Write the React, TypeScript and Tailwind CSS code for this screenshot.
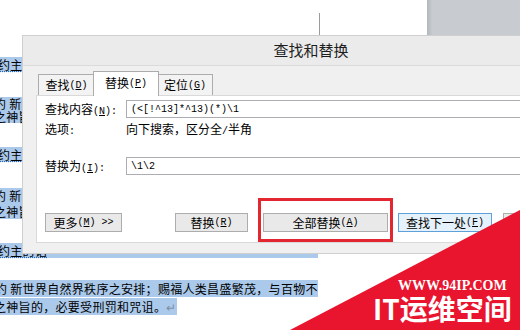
const mono = "font-['Liberation_Mono',monospace] text-[10px]";
const hl = "bg-[#abc9ea]";

const Key = ({ k, after = "" }: { k: string; after?: string }) => {
  return (
    <span className={mono}>
      (<span className="underline underline-offset-1">{k}</span>){after}
    </span>
  );
};

const Btn = ({
  label,
  k,
  tail = "",
  w,
  blue = false,
}: {
  label: string;
  k: string;
  tail?: string;
  w: string;
  blue?: boolean;
}) => {
  return (
    <div
      className={`${w} h-[19px] flex items-center justify-center border ${
        blue ? "border-[#5ea0da] bg-[#e5f1fb]" : "border-[#adadad] bg-[#e9e9e9]"
      }`}
    >
      {label}
      <Key k={k} after={tail} />
    </div>
  );
};

const App = () => {
  return (
    <div className="relative w-[520px] h-[330px] overflow-hidden bg-white text-black font-['Noto_Sans_CJK_SC','Noto_Sans',sans-serif] text-[12px]">
      {/* top of page + grey desk */}
      <div className="flex h-[35px]">
        <div className="w-[319px]"></div>
        <div className="w-px mt-[13px] bg-[#9c9c9c]"></div>
        <div className="flex-1"></div>
        <div className="w-[93px] bg-linear-to-r from-[#b3b6ba] from-0% to-[#c8cbd0] to-6%"></div>
      </div>

      {/* document behind the dialog */}
      <div className="tracking-[0.3px] whitespace-nowrap">
        <div className="mt-[22px] h-[15px] leading-[15px] -ml-[2px]">
          <span className={`${hl} inline-block w-[80px] underline decoration-dotted decoration-[#2b6cb0]`}>
            约主的话
          </span>
        </div>
        <div className="mt-[25px] -ml-[6px]">
          <div className="h-[13px] leading-[13px]">
            <span className={`${hl} inline-block w-[80px]`}>约 新世界</span>
          </div>
          <div className="h-[13px] leading-[13px]">
            <span className={`${hl} inline-block w-[80px]`}>之神旨的</span>
          </div>
        </div>
        <div className="mt-[24px] h-[15px] leading-[15px] -ml-[2px]">
          <span className={`${hl} inline-block w-[80px] underline decoration-dotted decoration-[#2b6cb0]`}>
            约主的话
          </span>
        </div>
        <div className="mt-[26px] -ml-[6px]">
          <div className="h-[15.5px] leading-[15.5px]">
            <span className={`${hl} inline-block w-[80px]`}>约 新世界</span>
          </div>
          <div className="h-[15.5px] leading-[15.5px]">
            <span className={`${hl} inline-block w-[80px]`}>之神旨的</span>
          </div>
        </div>
        <div className="mt-[24px] h-[15px] leading-[15px] -ml-[2px]">
          <span className={`${hl} inline-block w-[320px] underline decoration-dotted decoration-[#2b6cb0]`}>
            约主的话
          </span>
        </div>
        <div className="mt-[22px]">
          <div className="h-[17.5px] leading-[17.5px] -ml-[5px]">
            <span className={hl}>约 新世界自然界秩序之安排；赐福人类昌盛繁茂，与百物不</span>
          </div>
          <div className="h-[17.5px] leading-[17.5px] -ml-[6px]">
            <span className={hl}>
              之神旨的，必要受刑罚和咒诅。<span className="text-[#7d8fa6]">↵</span>
            </span>
          </div>
        </div>
      </div>

      {/* find & replace dialog */}
      <div className="absolute left-[22px] top-[35px] w-[578px] h-[219px] border border-[#cfcfcf] bg-[#f0f0f0] flex flex-col">
        <div className="h-[30px] shrink-0 border-b border-[#dadada] bg-[#ebebeb] flex items-center justify-center text-[15px] text-[#1e1e1e]">
          查找和替换
        </div>
        <div className="pt-[5px] pl-[13px]">
          <div className="flex items-end h-[24px] pl-[2px]">
            <div className="w-[57px] h-[21px] border border-b-0 border-[#acacac] bg-[#f3f3f3] flex items-center justify-center">
              查找<Key k="D" />
            </div>
            <div className="relative z-10 -mx-[2px] -mb-px w-[66px] h-[25px] border border-b-0 border-[#acacac] bg-white flex items-center justify-center pb-[2px]">
              替换<Key k="P" />
            </div>
            <div className="w-[56px] h-[21px] border border-b-0 border-[#acacac] bg-[#f3f3f3] flex items-center justify-center">
              定位<Key k="G" />
            </div>
          </div>

          <div className="h-[148px] border border-[#d9d9d9] bg-white pl-[8px] pt-[4px]">
            <div className="flex items-center h-[18px]">
              <div className="w-[81px]">
                查找内容<Key k="N" after=":" />
              </div>
              <div className={`flex-1 h-[18px] border border-[#abadb3] pl-[4px] flex items-center ${mono}`}>
                (&lt;[!^13]*^13)(*)\1
              </div>
            </div>
            <div className="flex items-center h-[16px] mt-[3px]">
              <div className="w-[81px]">
                选项<span className={mono}>:</span>
              </div>
              <div>
                向下搜索，区分全<span className={mono}>/</span>半角
              </div>
            </div>
            <div className="flex items-center h-[18px] mt-[20px]">
              <div className="w-[81px]">
                替换为<Key k="I" after=":" />
              </div>
              <div className={`flex-1 h-[18px] border border-[#abadb3] pl-[4px] flex items-center ${mono}`}>
                \1\2
              </div>
            </div>
            <div className="flex mt-[38px]">
              <Btn label="更多" k="M" tail=" >>" w="w-[77px]" />
              <div className="ml-[53px]">
                <Btn label="替换" k="R" w="w-[73px]" />
              </div>
              <div className="relative ml-[15px]">
                <Btn label="全部替换" k="A" w="w-[125px]" />
                <div className="absolute -left-[5px] -right-[5px] -top-[15px] -bottom-[10px] border-[3px] border-[#e3262f]"></div>
              </div>
              <div className="ml-[10px]">
                <Btn label="查找下一处" k="F" w="w-[94px]" blue />
              </div>
              <div className="ml-[11px]">
                <Btn label="取消" k="C" w="w-[90px]" />
              </div>
            </div>
          </div>
        </div>
      </div>

      {/* watermark */}
      <svg className="absolute right-0 bottom-0" width="230" height="120" viewBox="0 0 230 120">
        <polygon points="230,0 230,120 0,120" fill="#e9142d" />
      </svg>
      <div className="absolute left-[398px] top-[279px] text-white font-bold font-['Liberation_Serif',serif] text-[14px] leading-none">
        WWW.94IP.COM
      </div>
      <div className="absolute left-[373px] top-[294px] text-white font-bold text-[28px] leading-none">
        IT运维空间
      </div>
    </div>
  );
};

export default App;
